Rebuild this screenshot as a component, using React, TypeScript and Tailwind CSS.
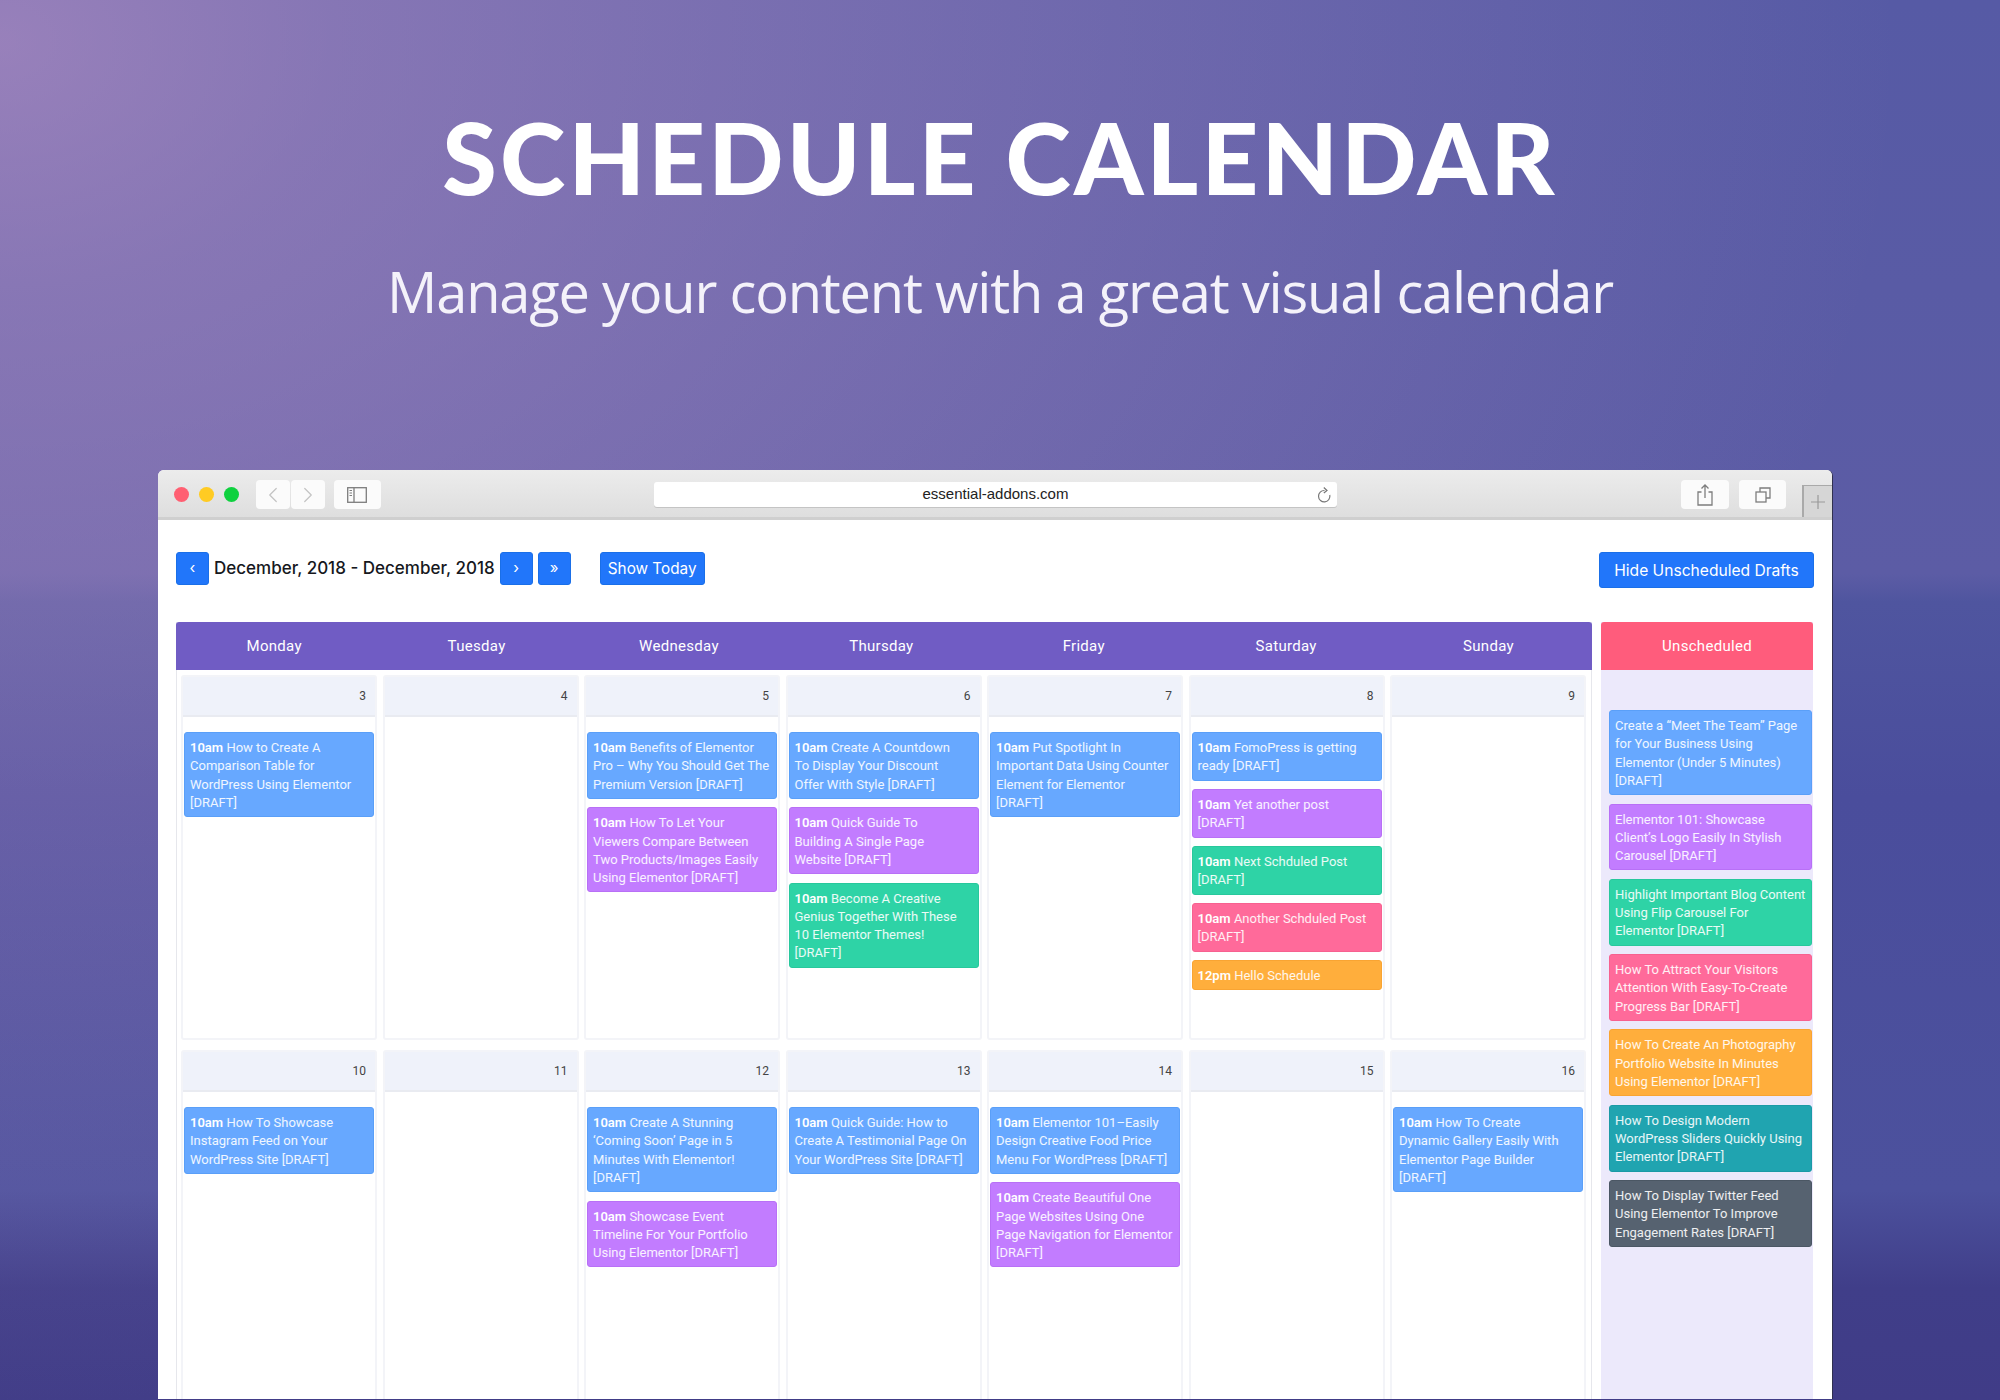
import { ChevronLeft, ChevronRight } from 'lucide-react'

type Tone = 'blue' | 'purple' | 'green' | 'pink' | 'orange' | 'teal' | 'slate'

type CalEvent = { time?: string; title: string; tone: Tone }

type Day = { date: number; events: CalEvent[] }

const toneClass: Record<Tone, string> = {
  blue: 'bg-[#67a8ff] border-[#5a9ff8]',
  purple: 'bg-[#c27cff] border-[#b870f6]',
  green: 'bg-[#2ed3a6] border-[#28c89c]',
  pink: 'bg-[#ff6a9a] border-[#f76190]',
  orange: 'bg-[#ffae3c] border-[#f9a432]',
  teal: 'bg-[#20a4b0] border-[#1b9aa6]',
  slate: 'bg-[#566270] border-[#4b5764]',
}

const dayNames = ['Monday', 'Tuesday', 'Wednesday', 'Thursday', 'Friday', 'Saturday', 'Sunday']

// titles carry their own line breaks so they wrap like the screenshot
const weekOne: Day[] = [
  { date: 3, events: [{ time: '10am', title: 'How to Create A\nComparison Table for\nWordPress Using Elementor\n[DRAFT]', tone: 'blue' }] },
  { date: 4, events: [] },
  {
    date: 5,
    events: [
      { time: '10am', title: 'Benefits of Elementor\nPro – Why You Should Get The\nPremium Version [DRAFT]', tone: 'blue' },
      { time: '10am', title: 'How To Let Your\nViewers Compare Between\nTwo Products/Images Easily\nUsing Elementor [DRAFT]', tone: 'purple' },
    ],
  },
  {
    date: 6,
    events: [
      { time: '10am', title: 'Create A Countdown\nTo Display Your Discount\nOffer With Style [DRAFT]', tone: 'blue' },
      { time: '10am', title: 'Quick Guide To\nBuilding A Single Page\nWebsite [DRAFT]', tone: 'purple' },
      { time: '10am', title: 'Become A Creative\nGenius Together With These\n10 Elementor Themes!\n[DRAFT]', tone: 'green' },
    ],
  },
  { date: 7, events: [{ time: '10am', title: 'Put Spotlight In\nImportant Data Using Counter\nElement for Elementor\n[DRAFT]', tone: 'blue' }] },
  {
    date: 8,
    events: [
      { time: '10am', title: 'FomoPress is getting\nready [DRAFT]', tone: 'blue' },
      { time: '10am', title: 'Yet another post\n[DRAFT]', tone: 'purple' },
      { time: '10am', title: 'Next Schduled Post\n[DRAFT]', tone: 'green' },
      { time: '10am', title: 'Another Schduled Post\n[DRAFT]', tone: 'pink' },
      { time: '12pm', title: 'Hello Schedule', tone: 'orange' },
    ],
  },
  { date: 9, events: [] },
]

const weekTwo: Day[] = [
  { date: 10, events: [{ time: '10am', title: 'How To Showcase\nInstagram Feed on Your\nWordPress Site [DRAFT]', tone: 'blue' }] },
  { date: 11, events: [] },
  {
    date: 12,
    events: [
      { time: '10am', title: 'Create A Stunning\n‘Coming Soon’ Page in 5\nMinutes With Elementor!\n[DRAFT]', tone: 'blue' },
      { time: '10am', title: 'Showcase Event\nTimeline For Your Portfolio\nUsing Elementor [DRAFT]', tone: 'purple' },
    ],
  },
  { date: 13, events: [{ time: '10am', title: 'Quick Guide: How to\nCreate A Testimonial Page On\nYour WordPress Site [DRAFT]', tone: 'blue' }] },
  {
    date: 14,
    events: [
      { time: '10am', title: 'Elementor 101–Easily\nDesign Creative Food Price\nMenu For WordPress [DRAFT]', tone: 'blue' },
      { time: '10am', title: 'Create Beautiful One\nPage Websites Using One\nPage Navigation for Elementor\n[DRAFT]', tone: 'purple' },
    ],
  },
  { date: 15, events: [] },
  { date: 16, events: [{ time: '10am', title: 'How To Create\nDynamic Gallery Easily With\nElementor Page Builder\n[DRAFT]', tone: 'blue' }] },
]

const unscheduled: CalEvent[] = [
  { title: 'Create a “Meet The Team” Page\nfor Your Business Using\nElementor (Under 5 Minutes)\n[DRAFT]', tone: 'blue' },
  { title: 'Elementor 101: Showcase\nClient’s Logo Easily In Stylish\nCarousel [DRAFT]', tone: 'purple' },
  { title: 'Highlight Important Blog Content\nUsing Flip Carousel For\nElementor [DRAFT]', tone: 'green' },
  { title: 'How To Attract Your Visitors\nAttention With Easy-To-Create\nProgress Bar [DRAFT]', tone: 'pink' },
  { title: 'How To Create An Photography\nPortfolio Website In Minutes\nUsing Elementor [DRAFT]', tone: 'orange' },
  { title: 'How To Design Modern\nWordPress Sliders Quickly Using\nElementor [DRAFT]', tone: 'teal' },
  { title: 'How To Display Twitter Feed\nUsing Elementor To Improve\nEngagement Rates [DRAFT]', tone: 'slate' },
]

function EventCard({ event }: { event: CalEvent }) {
  return (
    <div className={`rounded-[3px] border pt-[6px] pb-[4px] pl-[5px] font-['Roboto',sans-serif] text-[13px] leading-[18.3px] whitespace-pre-line text-white/90 ${toneClass[event.tone]}`}>
      {event.time && <span className="font-semibold text-white">{event.time} </span>}
      {event.title}
    </div>
  )
}

function DayCell({ day, tall }: { day: Day; tall?: boolean }) {
  return (
    <div className={`w-[196px] shrink-0 rounded-[3px] border-2 border-[#f3f4f8] ${tall ? 'h-[400px]' : 'h-[365px]'}`}>
      <div className="flex h-[40px] items-center justify-end border-b-2 border-[#e9ebf1] bg-[#eff2fa] pr-[9px] font-['Roboto',sans-serif] text-[12px] text-[#444]">
        {day.date}
      </div>
      <div className="flex flex-col gap-[8.4px] px-px pt-[15px]">
        {day.events.map((event) => (
          <EventCard key={event.title} event={event} />
        ))}
      </div>
    </div>
  )
}

function ToolButton({ className, children }: { className: string; children?: React.ReactNode }) {
  return <div className={`flex h-[29px] items-center justify-center rounded-[4px] bg-[#fbfbfb] ${className}`}>{children}</div>
}

function NavButton({ label }: { label: string }) {
  return (
    <button className="flex h-[33px] w-[33px] items-center justify-center rounded-[3px] border border-[#1a6fe8] bg-[#2176fa] text-[15px] text-white">
      {label}
    </button>
  )
}

export default function App() {
  return (
    <div className="h-[1400px] w-[2000px] overflow-hidden bg-[radial-gradient(ellipse_1900px_1400px_at_0%_3%,rgba(192,152,200,0.62)_0%,rgba(192,152,200,0.45)_18%,rgba(192,152,200,0)_100%),linear-gradient(180deg,#565aa5_0%,#5c5ca5_41%,#4f559f_43%,#4a4d9c_57%,#4c519d_85%,#403e89_92%,#403c87_100%)] font-['Inter',sans-serif]">
      <header className="flex h-[470px] flex-col items-center text-white">
        <h1 className="mt-[102px] font-['Lato',sans-serif] text-[99px] leading-[110px] font-black tracking-[3.2px]">SCHEDULE CALENDAR</h1>
        <p className="mt-[44px] font-['Open_Sans',sans-serif] text-[56px] leading-[70px] tracking-[-1.2px] text-[#f4f2fa]">Manage your content with a great visual calendar</p>
      </header>

      <div className="ml-[158px] h-[929px] w-[1675px] overflow-hidden rounded-t-[6px] border-r border-[#30304f] bg-white">
        <div className="flex h-[50px] items-center border-b-[3px] border-[#cfcfcf] bg-gradient-to-b from-[#ececec] to-[#dedede] pt-[2px] pl-[16px]">
          <div className="flex gap-[10px]">
            <span className="h-[15px] w-[15px] rounded-full bg-[#ff5f72]" />
            <span className="h-[15px] w-[15px] rounded-full bg-[#ffcb23]" />
            <span className="h-[15px] w-[15px] rounded-full bg-[#0fd13f]" />
          </div>
          <ToolButton className="ml-[17px] w-[34px]">
            <ChevronLeft size={26} strokeWidth={1.2} className="text-[#c4c4c4]" />
          </ToolButton>
          <ToolButton className="ml-px w-[34px]">
            <ChevronRight size={26} strokeWidth={1.2} className="text-[#c4c4c4]" />
          </ToolButton>
          <ToolButton className="ml-[9px] w-[47px]">
            <svg width="20" height="16" viewBox="0 0 20 16" fill="none" stroke="#7d7d7d" strokeWidth="1.3">
              <rect x="0.7" y="0.7" width="18.6" height="14.6" />
              <path d="M7 0.7V15.3" />
              <path d="M2.5 3.5H5M2.5 6H5M2.5 8.5H5" strokeWidth="1" />
            </svg>
          </ToolButton>
          <div className="relative ml-[273px] flex h-[25px] w-[685px] items-center justify-center rounded-[3px] bg-white font-['Liberation_Sans',sans-serif] text-[15px] text-[#222] shadow-[0_1px_0_#c4c4c4]">
            essential-addons.com
            <svg width="14" height="18" viewBox="0 0 14 18" fill="none" stroke="#777" strokeWidth="1.2" className="absolute right-[6px]">
              <path d="M7.5 4.5A5.7 5.7 0 1 0 12.8 9" />
              <path d="M6.8 1.5L10 4.5L6.8 7" />
            </svg>
          </div>
          <ToolButton className="ml-[344px] w-[48px]">
            <svg width="16" height="22" viewBox="0 0 16 22" fill="none" stroke="#7d7d7d" strokeWidth="1.3">
              <path d="M4.5 8H1V21H15V8H11.5" />
              <path d="M8 14V1M4.5 4.5L8 1L11.5 4.5" />
            </svg>
          </ToolButton>
          <ToolButton className="ml-[10px] w-[47px]">
            <svg width="16" height="16" viewBox="0 0 16 16" fill="none" stroke="#7d7d7d" strokeWidth="1.3">
              <rect x="1" y="5" width="10" height="10" />
              <path d="M5 5V1H15V11H11" />
            </svg>
          </ToolButton>
          <div className="ml-[16px] flex h-[32px] w-[30px] items-center justify-center self-end border-t border-l-2 border-[#a9a9a9] bg-[#d6d6d6] text-[#999]">
            <svg width="14" height="14" viewBox="0 0 14 14" stroke="#999" strokeWidth="1.2">
              <path d="M7 0V14M0 7H14" />
            </svg>
          </div>
        </div>

        <div className="flex h-[102px] items-start justify-between pt-[32px] pr-[18px] pl-[18px]">
          <div className="flex items-center">
            <NavButton label="‹" />
            <span className="mx-[5px] pt-px text-[17px] font-medium text-[#16181d]">December, 2018 - December, 2018</span>
            <NavButton label="›" />
            <span className="ml-[5px]">
              <NavButton label="»" />
            </span>
            <button className="ml-[29px] flex h-[33px] w-[105px] items-center justify-center rounded-[3px] border border-[#1a6fe8] bg-[#2176fa] pt-px text-[15.3px] text-white">
              Show Today
            </button>
          </div>
          <button className="h-[36px] w-[215px] rounded-[3px] border border-[#1a6fe8] bg-[#2176fa] pt-px text-[15.6px] text-white">
            Hide Unscheduled Drafts
          </button>
        </div>

        <div className="flex pl-[18px]">
          <div className="w-[1416px] border-x border-[#e6e7ec]">
            <div className="-mx-px h-[48px] rounded-t-[3px] bg-[#705cc4] pt-px font-['Roboto',sans-serif] text-[15px] tracking-[0.3px] text-white">
              <div className="-ml-[3px] grid h-full w-[1417px] grid-cols-[repeat(7,202.4px)] items-center text-center">
                {dayNames.map((name) => (
                  <span key={name}>{name}</span>
                ))}
              </div>
            </div>
            <div className="flex gap-[5.5px] pt-[5px] pl-[4px]">
              {weekOne.map((day) => (
                <DayCell key={day.date} day={day} />
              ))}
            </div>
            <div className="flex gap-[5.5px] pt-[10px] pl-[4px]">
              {weekTwo.map((day) => (
                <DayCell key={day.date} day={day} tall />
              ))}
            </div>
          </div>
          <div className="ml-[9px] h-[777px] w-[212px] bg-[#ece9fb]">
            <div className="flex h-[48px] items-center justify-center rounded-t-[3px] bg-[#ff5c7c] pt-px font-['Roboto',sans-serif] text-[15px] tracking-[0.3px] text-white">Unscheduled</div>
            <div className="flex flex-col gap-[8.4px] pt-[40px] pr-px pl-[8px]">
              {unscheduled.map((event) => (
                <EventCard key={event.title} event={event} />
              ))}
            </div>
          </div>
        </div>
      </div>
    </div>
  )
}
